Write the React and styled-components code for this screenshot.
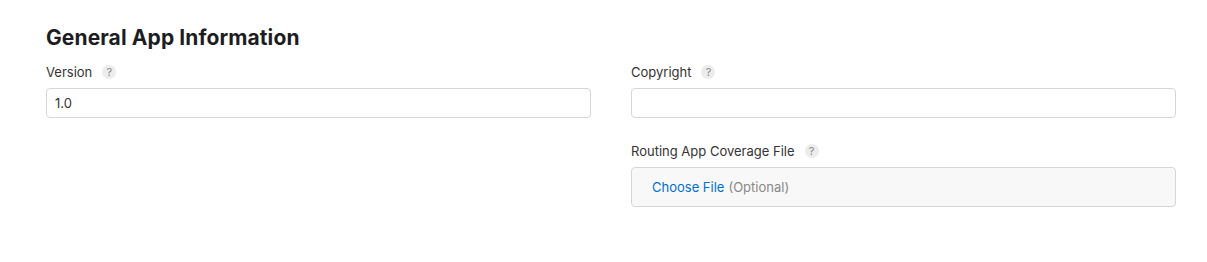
import React from "react";
import styled, { createGlobalStyle } from "styled-components";

const Global = createGlobalStyle`
  html, body { margin: 0; padding: 0; background: #fff; }
  body { font-family: Inter, "Noto Sans", sans-serif; color: #333; -webkit-font-smoothing: antialiased; }
`;

const Section = styled.section`
  padding: 25px 31px 0 46px;
`;

const Title = styled.h2`
  margin: 0 0 12px;
  font-size: 21px;
  line-height: 26px;
  font-weight: 700;
  color: #1d1d1f;
  letter-spacing: 0.1px;
`;

const Grid = styled.div`
  display: grid;
  grid-template-columns: 545px 545px;
  column-gap: 40px;
`;

const Column = styled.div`
  display: flex;
  flex-direction: column;
  gap: 24px;
`;

const Field = styled.div`
  display: flex;
  flex-direction: column;
  gap: 7px;
`;

const Label = styled.label`
  display: flex;
  align-items: center;
  gap: 10px;
  font-size: 13px;
  line-height: 18px;
  color: #333;
`;

const Help = styled.span`
  width: 14px;
  height: 14px;
  border-radius: 50%;
  background: #ececec;
  color: #888;
  font-size: 11px;
  line-height: 14px;
  text-align: center;
`;

const Input = styled.input`
  box-sizing: border-box;
  width: 100%;
  height: 30px;
  border: 1px solid #d6d6d6;
  border-radius: 4px;
  padding: 0 8px;
  font: inherit;
  font-size: 13px;
  color: #333;
  background: #fff;
  outline: none;
`;

const FileBox = styled.div`
  box-sizing: border-box;
  height: 40px;
  border: 1px solid #d6d6d6;
  border-radius: 4px;
  background: #f8f8f8;
  display: flex;
  align-items: center;
  padding: 0 20px;
  font-size: 13px;
  gap: 4px;
`;

const Link = styled.span`
  color: #0070c9;
`;

const Muted = styled.span`
  color: #888;
`;

export default function App() {
  return (
    <>
      <Global />
      <Section>
        <Title>General App Information</Title>
        <Grid>
          <Column>
            <Field>
              <Label>Version <Help>?</Help></Label>
              <Input defaultValue="1.0" />
            </Field>
          </Column>
          <Column>
            <Field>
              <Label>Copyright <Help>?</Help></Label>
              <Input defaultValue="" />
            </Field>
            <Field>
              <Label>Routing App Coverage File <Help>?</Help></Label>
              <FileBox>
                <Link>Choose File</Link>
                <Muted>(Optional)</Muted>
              </FileBox>
            </Field>
          </Column>
        </Grid>
      </Section>
    </>
  );
}
